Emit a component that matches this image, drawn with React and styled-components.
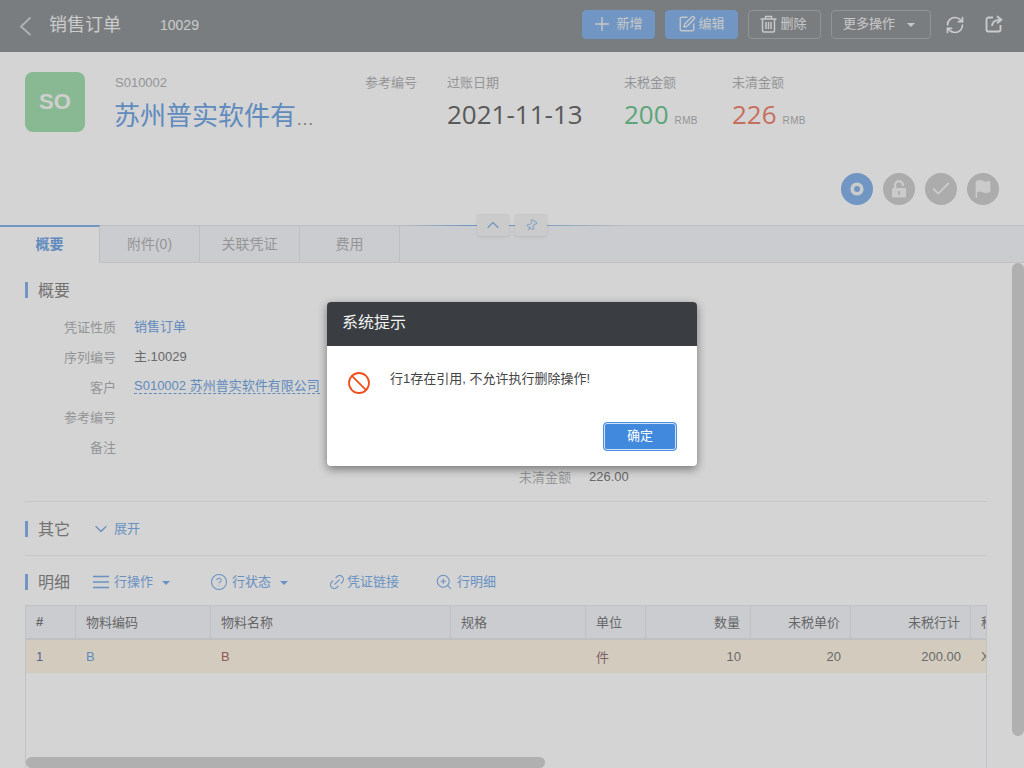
import React from "react";
import styled, { createGlobalStyle } from "styled-components";
import {
  Plus, SquarePen, RefreshCw, ChevronUp, ChevronDown, Pin, Ban,
  Check, Flag, CircleHelp, Link2, ZoomIn,
} from "lucide-react";

const Global = createGlobalStyle`
  html, body { margin: 0; padding: 0; }
  body {
    width: 1024px; height: 768px; overflow: hidden; background: #fff;
    font-family: "Liberation Sans", "Noto Sans CJK SC", sans-serif;
    color: #666;
  }
  * { box-sizing: border-box; }
`;

const Page = styled.div`
  position: relative;
  width: 1024px;
  height: 768px;
  overflow: hidden;
  display: flex;
  flex-direction: column;
`;

const TopBar = styled.header`
  height: 52px;
  flex: none;
  background: #93979a;
  display: flex;
  align-items: center;
  padding-left: 19px;
  color: #fff;
`;
const PageTitle = styled.div`
  font-size: 18px; line-height: 22px; margin: 0 0 3px 17px; width: 111px; color: #f4f4f4;
`;
const PageNo = styled.div`font-size: 14px; color: #f4f4f4; margin-bottom: 2px;`;
const Actions = styled.div`
  margin-left: auto;
  display: flex;
  align-items: center;
  gap: 10px;
  padding-right: 93px;
  margin-bottom: 3px;
`;
const ActionBtn = styled.button`
  height: 29px;
  width: ${(p) => p.$w || 73}px;
  border-radius: 4px;
  border: 1px solid ${(p) => (p.$primary ? "#88b5eb" : "#aeb2b6")};
  background: ${(p) => (p.$primary ? "#88b5eb" : "transparent")};
  color: #f0f0f0;
  font: 13px/16px "Liberation Sans", "Noto Sans CJK SC", sans-serif;
  display: flex;
  align-items: center;
  justify-content: center;
  gap: ${(p) => p.$gap ?? 3}px;
  padding: 0 ${(p) => p.$pr || 0}px 2px 0;
`;
const Caret = styled.span`
  display: inline-block;
  width: 0; height: 0;
  border-left: 4.5px solid transparent;
  border-right: 4.5px solid transparent;
  border-top: 4.5px solid ${(p) => p.$color || "#f0f0f0"};
  margin-left: ${(p) => p.$gap || 9}px;
  margin-top: 2px;
`;
const ToolIcons = styled.div`
  position: absolute;
  top: 15px;
  left: 945px;
  display: flex;
  gap: 20px;
  color: #f4f4f4;
`;

const Summary = styled.section`
  position: relative;
  height: 174px;
  flex: none;
  background: #fff;
  border-bottom: 1px solid #e3e5e8;
  padding: 20px 0 0 25px;
  display: flex;
  align-items: flex-start;
`;
const Logo = styled.div`
  width: 60px; height: 60px; border-radius: 8px;
  background: #a5dfb0;
  color: #f8f8f8;
  font-size: 22px; font-weight: 700;
  display: flex; align-items: center; justify-content: center;
  flex: none;
  margin-right: 30px;
`;
const Field = styled.div`
  width: ${(p) => p.$w}px;
  flex: none;
`;
const FieldLabel = styled.div`
  font-size: 13px; line-height: 16px; height: 16px; margin-top: 3px; color: #b2b4b6;
`;
const Customer = styled.div`
  margin: 7px 0 0 -1px;
  font-size: 18px; line-height: 36px; color: #999; white-space: nowrap;
  width: 202px; overflow: hidden; text-overflow: ellipsis;
`;
const CustomerName = styled.span`color: #74a8e6; font-size: 26px;`;
const BigValue = styled.div`
  margin-top: 5px;
  font-family: "Open Sans", sans-serif;
  font-size: 26px; line-height: 36px; color: ${(p) => p.$color || "#6c6c6c"};
  white-space: nowrap;
`;
const Unit = styled.span`
  font-family: "Liberation Sans", sans-serif;
  font-size: 10px; color: #b2b4b6; margin-left: 6px; letter-spacing: .3px;
`;
const StatusRow = styled.div`
  position: absolute;
  right: 25px; top: 121px;
  display: flex; gap: 10px;
`;
const StatusDot = styled.div`
  width: 32px; height: 32px; border-radius: 50%;
  background: ${(p) => (p.$on ? "#88b5eb" : "#cfcfcf")};
  color: #f4f4f4;
  display: flex; align-items: center; justify-content: center;
`;
const DividerGlow = styled.div`
  position: absolute;
  left: 400px; bottom: -1px; width: 224px; height: 1px;
  background: linear-gradient(90deg, transparent, #88b5eb 30%, #88b5eb 55%, transparent);
`;
const CollapseGroup = styled.div`
  position: absolute;
  left: 477px; top: 162px;
  display: flex; gap: 6px;
`;
const CollapseBtn = styled.button`
  width: 32px; height: 22px; padding: 0; border: 0; border-radius: 3px;
  background: #f4f4f4;
  box-shadow: 0 1px 3px rgba(0,0,0,.1);
  color: #88b5eb;
  display: flex; align-items: center; justify-content: center;
`;

const Tabs = styled.nav`
  height: 37px; flex: none; display: flex;
  background: #f5f6f9;
  border-bottom: 1px solid #e8e9ec;
`;
const Tab = styled.div`
  position: relative;
  width: 100px;
  height: ${(p) => (p.$active ? "38px" : "36px")};
  margin-top: ${(p) => (p.$active ? "-1px" : 0)};
  flex: none;
  font-size: 14px;
  display: flex; align-items: center; justify-content: center;
  border-right: 1px solid #e5e6e9;
  background: ${(p) => (p.$active ? "#fff" : "#f5f6f9")};
  color: ${(p) => (p.$active ? "#74a8e6" : "#b2b4b6")};
  font-weight: ${(p) => (p.$active ? 700 : 400)};
  border-top: ${(p) => (p.$active ? "2px solid #88b5eb" : "0")};
  padding-bottom: ${(p) => (p.$active ? 5 : 3)}px;
`;

const Content = styled.main`
  flex: 1;
  min-height: 0;
  background: #fff;
  padding: 19px 37px 0 25px;
  display: flex;
  flex-direction: column;
`;
const SectionHead = styled.div`
  display: flex;
  align-items: center;
  height: 16px;
  flex: none;
`;
const SectionTitle = styled.h3`
  margin: 0;
  border-left: 3px solid #88b5eb;
  padding-left: 10px;
  height: 16px;
  line-height: 17px;
  font-size: 16px;
  font-weight: 400;
  color: #8a8a8a;
  width: ${(p) => p.$w || 68}px;
  flex: none;
`;
const LinkItem = styled.span`
  display: inline-flex;
  align-items: center;
  gap: ${(p) => p.$gap ?? 4}px;
  font-size: 13px;
  line-height: 16px;
  color: #7fb0ea;
  margin-right: ${(p) => p.$mr || 0}px;
`;
const FormGrid = styled.div`
  display: grid;
  grid-template-columns: 455px 1fr;
  grid-auto-rows: 30px;
  margin-top: 14px;
  flex: none;
`;
const FormRow = styled.div`
  grid-column: ${(p) => p.$col || 1};
  grid-row: ${(p) => p.$row};
  display: flex;
  align-items: center;
  gap: 18px;
  padding-bottom: 2px;
`;
const FormLabel = styled.span`
  width: 91px; text-align: right; color: #b2b4b6; font-size: 13px; flex: none;
`;
const FormValue = styled.span`
  color: ${(p) => (p.$link ? "#74a8e6" : "#808080")};
  font-size: 13px;
  line-height: 15px;
  border-bottom: ${(p) => (p.$dashed ? "1px dashed #74a8e6" : "0")};
  white-space: nowrap;
`;
const Rule = styled.div`
  height: 1px; background: #eef0f2; flex: none;
  margin: ${(p) => p.$m};
`;

const TableWrap = styled.div`
  margin-top: 15px;
  flex: 1;
  min-height: 0;
  position: relative;
  overflow: hidden;
  border: 1px solid #e9eaed;
  border-bottom: 0;
`;
const TRow = styled.div`
  display: grid;
  grid-template-columns: 50px 135px 240px 135px 60px 105px 100px 120px 120px;
  height: ${(p) => p.$h}px;
  background: ${(p) => p.$bg};
  border-bottom: ${(p) => (p.$head ? "2px solid #e6e7ea" : "0")};
  width: 1065px;
`;
const HCell = styled.div`
  font-size: 13px;
  color: #7a7b7d;
  font-weight: ${(p) => (p.$bold ? 700 : 400)};
  display: flex; align-items: center;
  justify-content: ${(p) => (p.$right ? "flex-end" : "flex-start")};
  padding: 0 10px 2px;
  border-right: 1px solid #e6e7ea;
`;
const Cell = styled.div`
  font-size: 13px;
  color: ${(p) => p.$color || "#808080"};
  display: flex; align-items: center;
  justify-content: ${(p) => (p.$right ? "flex-end" : "flex-start")};
  padding: 0 10px;
`;

const VScroll = styled.div`
  position: absolute; left: 1012px; top: 263px;
  width: 12px; height: 473px; border-radius: 6px;
  background: #d4d4d4;
`;
const HScroll = styled.div`
  position: absolute; left: 26px; top: 757px;
  width: 519px; height: 11px; border-radius: 6px;
  background: #d4d4d4;
`;

const Overlay = styled.div`
  position: absolute; inset: 0;
  background: rgba(0,0,0,.17);
  display: flex;
  justify-content: center;
  align-items: flex-start;
  padding-top: 302px;
`;
const Dialog = styled.div`
  width: 370px; height: 164px;
  border-radius: 4px;
  background: #fff;
  box-shadow: 0 3px 10px rgba(0,0,0,.45);
  overflow: hidden;
  display: flex; flex-direction: column;
`;
const DialogHead = styled.div`
  height: 44px; flex: none;
  background: #3a3e42;
  color: #f2f2f2;
  font-size: 16px;
  line-height: 20px;
  display: flex; align-items: center;
  padding: 0 0 3px 15px;
`;
const DialogBody = styled.div`
  flex: 1;
  display: flex;
  align-items: flex-start;
  padding: 25px 0 0 20px;
  gap: 19px;
`;
const BanIcon = styled(Ban)`
  width: 24px; height: 24px; color: #f0501e; flex: none;
`;
const DialogMsg = styled.div`
  font-size: 13px; line-height: 16px; color: #444; margin-top: 0;
`;
const DialogFoot = styled.div`
  height: 44px;
  flex: none;
  display: flex; justify-content: flex-end;
  padding: 0 20px 15px 0;
`;
const OkBtn = styled.button`
  width: 74px; height: 29px;
  border-radius: 4px;
  border: 1px solid #4a90e2;
  box-shadow: inset 0 0 0 1px #cfe2f8;
  background: #4189dd;
  color: #fff;
  font: 13px/16px "Liberation Sans", "Noto Sans CJK SC", sans-serif;
  padding: 0 0 2px;
`;

const BackIcon = () => (
  <svg width="13" height="20" viewBox="0 0 13 20" fill="none" stroke="#d4d6d8" strokeWidth="1.800" style={{ marginBottom: 1 }}>
    <path d="M11.500 1.500L2 10.500l9.500 8.500" />
  </svg>
);
const TrashIcon = () => (
  <svg width="17" height="18" viewBox="0 0 17 18" fill="none" stroke="currentColor" strokeWidth="1.500" style={{ marginRight: 3 }}>
    <path d="M.5 4h16M5.500 4V1.500h6V4M2.500 4v11.500a1.500 1.500 0 0 0 1.500 1.500h9a1.500 1.500 0 0 0 1.500-1.500V4M6 7v7M8.500 7v7M11 7v7" />
  </svg>
);
const ShareIcon = () => (
  <svg width="18" height="18" viewBox="0 0 18 18" fill="none" stroke="currentColor" strokeWidth="1.800">
    <path d="M8 2.500H3.500a2 2 0 0 0-2 2v10a2 2 0 0 0 2 2h10a2 2 0 0 0 2-2V10" />
    <path d="M7 11c.3-4 3-6.200 8-6.200" />
    <path d="M12 1.200l4.400 3.500L12 8.200" />
  </svg>
);
const LockIcon = () => (
  <svg width="16" height="18" viewBox="0 0 16 18" fill="currentColor">
    <path d="M3 8V5a5 5 0 0 1 10 0v1h-2.200V5a2.800 2.800 0 0 0-5.600 0v3H14a1 1 0 0 1 1 1v7.500a1 1 0 0 1-1 1H2a1 1 0 0 1-1-1V9a1 1 0 0 1 1-1zm5 3a1.200 1.200 0 0 0-.7 2.200V15h1.400v-1.800A1.200 1.200 0 0 0 8 11z" />
  </svg>
);
const LinesIcon = () => (
  <svg width="16" height="14" viewBox="0 0 16 14" fill="none" stroke="currentColor" strokeWidth="1.300">
    <path d="M0 1.500h16M0 7h16M0 12.500h16" />
  </svg>
);

const head = [
  ["#", 0, 1], ["物料编码"], ["物料名称"], ["规格"], ["单位"],
  ["数量", 1], ["未税单价", 1], ["未税行计", 1], ["税率"],
];

export default function App() {
  return (
    <Page>
      <Global />
      <TopBar>
        <BackIcon />
        <PageTitle>销售订单</PageTitle>
        <PageNo>10029</PageNo>
        <Actions>
          <ActionBtn $primary $pr={3}><Plus size={22} strokeWidth={1.500} />新增</ActionBtn>
          <ActionBtn $primary $gap={2}><SquarePen size={18} strokeWidth={1.800} />编辑</ActionBtn>
          <ActionBtn $gap={0} $pr={2}><TrashIcon />删除</ActionBtn>
          <ActionBtn $w={100} $pr={4}>更多操作<Caret /></ActionBtn>
        </Actions>
        <ToolIcons>
          <RefreshCw size={20} strokeWidth={2} />
          <ShareIcon />
        </ToolIcons>
      </TopBar>

      <Summary>
        <Logo>SO</Logo>
        <Field $w={250}>
          <FieldLabel>S010002</FieldLabel>
          <Customer><CustomerName>苏州普实软件有限公司</CustomerName></Customer>
        </Field>
        <Field $w={82}>
          <FieldLabel>参考编号</FieldLabel>
        </Field>
        <Field $w={177}>
          <FieldLabel>过账日期</FieldLabel>
          <BigValue>2021-11-13</BigValue>
        </Field>
        <Field $w={108}>
          <FieldLabel>未税金额</FieldLabel>
          <BigValue $color="#6fc795">200<Unit>RMB</Unit></BigValue>
        </Field>
        <Field $w={108}>
          <FieldLabel>未清金额</FieldLabel>
          <BigValue $color="#f08670">226<Unit>RMB</Unit></BigValue>
        </Field>
        <StatusRow>
          <StatusDot $on><svg width="16" height="16" viewBox="0 0 16 16"><circle cx="8" cy="8" r="4.800" fill="none" stroke="currentColor" strokeWidth="3.600" /></svg></StatusDot>
          <StatusDot><LockIcon /></StatusDot>
          <StatusDot><Check size={22} strokeWidth={2} /></StatusDot>
          <StatusDot><Flag size={20} fill="currentColor" strokeWidth={1.800} /></StatusDot>
        </StatusRow>
        <DividerGlow />
        <CollapseGroup>
          <CollapseBtn><ChevronUp size={20} strokeWidth={1.300} /></CollapseBtn>
          <CollapseBtn><Pin size={13} strokeWidth={1.500} style={{ transform: "rotate(35deg)" }} /></CollapseBtn>
        </CollapseGroup>
      </Summary>

      <Tabs>
        <Tab $active>概要</Tab>
        <Tab>附件(0)</Tab>
        <Tab>关联凭证</Tab>
        <Tab>费用</Tab>
      </Tabs>

      <Content>
        <SectionHead><SectionTitle>概要</SectionTitle></SectionHead>
        <FormGrid>
          <FormRow><FormLabel>凭证性质</FormLabel><FormValue $link>销售订单</FormValue></FormRow>
          <FormRow><FormLabel>序列编号</FormLabel><FormValue>主.10029</FormValue></FormRow>
          <FormRow><FormLabel>客户</FormLabel><FormValue $link $dashed>S010002 苏州普实软件有限公司</FormValue></FormRow>
          <FormRow><FormLabel>参考编号</FormLabel></FormRow>
          <FormRow><FormLabel>备注</FormLabel></FormRow>
          <FormRow $col={2} $row={6}><FormLabel>未清金额</FormLabel><FormValue>226.00</FormValue></FormRow>
        </FormGrid>
        <Rule $m="9px 0 19px" />
        <SectionHead>
          <SectionTitle $w={66}>其它</SectionTitle>
          <LinkItem $gap={3}><ChevronDown size={20} strokeWidth={1.500} />展开</LinkItem>
        </SectionHead>
        <Rule $m="18px 0" />
        <SectionHead>
          <SectionTitle>明细</SectionTitle>
          <LinkItem $mr={40} $gap={5}><LinesIcon />行操作<Caret $color="#7fb0ea" $gap={4} /></LinkItem>
          <LinkItem $mr={40}><CircleHelp size={18} strokeWidth={1.400} />行状态<Caret $color="#7fb0ea" $gap={5} /></LinkItem>
          <LinkItem $mr={36} $gap={1}><Link2 size={18} strokeWidth={1.500} style={{ transform: "rotate(-45deg)" }} />凭证链接</LinkItem>
          <LinkItem><ZoomIn size={18} strokeWidth={1.400} />行明细</LinkItem>
        </SectionHead>
        <TableWrap>
          <TRow $h={34} $bg="#f5f6f9" $head>
            {head.map(([t, right, bold]) => (
              <HCell key={t} $right={right} $bold={bold}>{t}</HCell>
            ))}
          </TRow>
          <TRow $h={33} $bg="#fef6e5">
            <Cell $color="#6f78b0">1</Cell>
            <Cell $color="#74a8e6">B</Cell>
            <Cell $color="#b06a64">B</Cell>
            <Cell />
            <Cell $color="#96757c">件</Cell>
            <Cell $right>10</Cell>
            <Cell $right>20</Cell>
            <Cell $right>200.00</Cell>
            <Cell>X</Cell>
          </TRow>
        </TableWrap>
      </Content>

      <VScroll />
      <HScroll />

      <Overlay>
        <Dialog>
          <DialogHead>系统提示</DialogHead>
          <DialogBody>
            <BanIcon strokeWidth={1.800} />
            <DialogMsg>行1存在引用, 不允许执行删除操作!</DialogMsg>
          </DialogBody>
          <DialogFoot><OkBtn>确定</OkBtn></DialogFoot>
        </Dialog>
      </Overlay>
    </Page>
  );
}
